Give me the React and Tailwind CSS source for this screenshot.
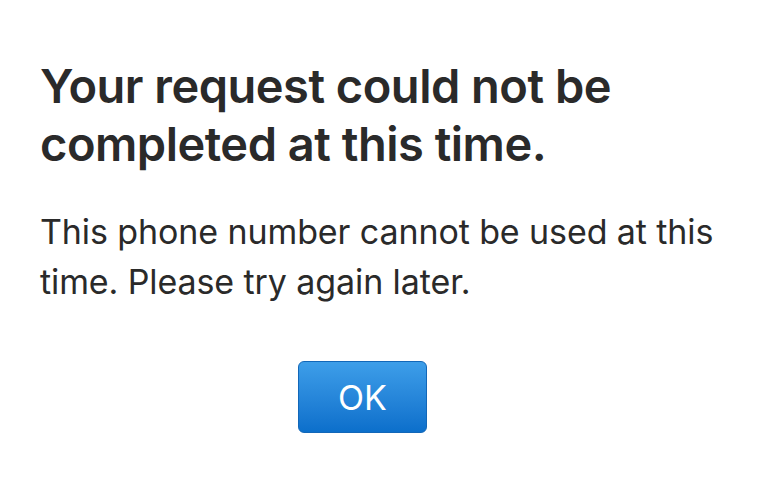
export default function App() {
  return (
    <div className="w-[768px] h-[497px] bg-white overflow-hidden font-['Inter',sans-serif] text-[#2a2a2a]">
      <div className="pl-[40px] pr-[20px] pt-[57px]">
        <h1 className="text-[47px] leading-[58px] font-semibold tracking-[-0.5px]">
          Your request could not be completed at this time.
        </h1>
        <p className="mt-[34px] text-[34px] leading-[50px] font-normal tracking-[-0.1px]">
          This phone number cannot be used at this time. Please try again later.
        </p>
        <div className="flex pl-[258px] mt-[54px]">
          <button className="w-[129px] h-[72px] rounded-[6px] border border-[#1267b8] bg-gradient-to-b from-[#3d9ee9] to-[#0b6fcb] text-white text-[34px] font-normal">
            OK
          </button>
        </div>
      </div>
    </div>
  );
}
